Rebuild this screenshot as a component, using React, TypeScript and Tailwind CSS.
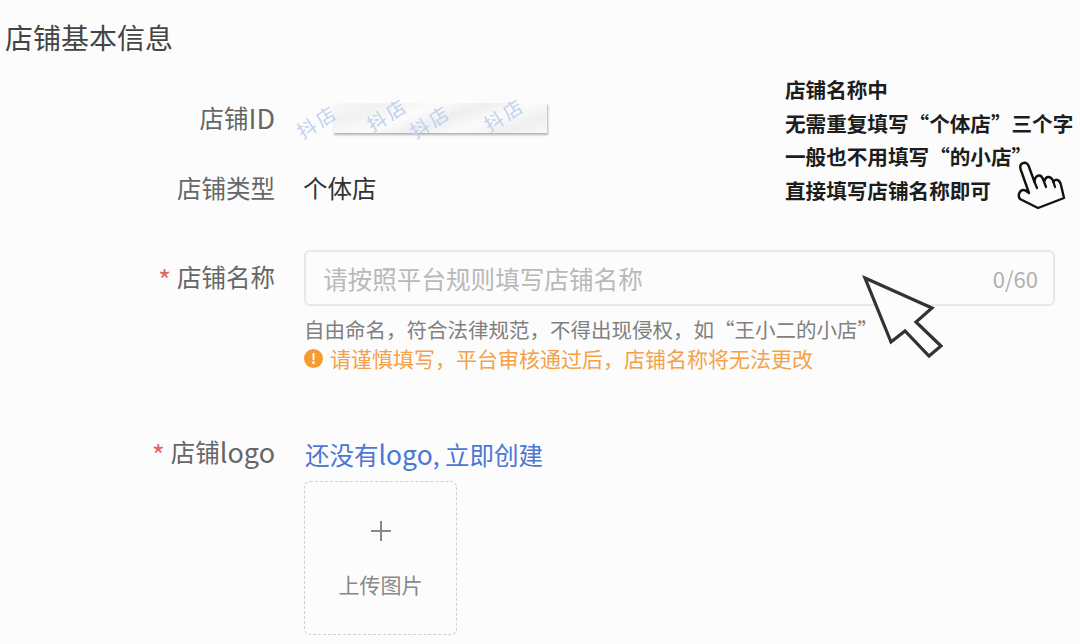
function Arrow() {
  return (
    <svg className="absolute left-[860px] top-[274px]" width="86" height="86" viewBox="0 0 86 86" fill="none">
      <path d="M5 4 L72 34 L56 48 L81 72 L69 82 L45 57 L31 68 Z" fill="#fcfcfc" stroke="#333" strokeWidth="3.2" strokeLinejoin="miter" />
    </svg>
  );
}
function Hand() {
  return (
    <svg className="absolute left-[1010px] top-[155px]" width="60" height="60" viewBox="0 0 60 60" fill="none">
      <path d="M19 38 L10.500 14 C9 8.500 15.500 5 18.500 10.500 L24.500 27 C25 20 30.500 18 33 24 L34.500 26 C36 20 41.500 21 43.500 27 C45.500 23 50 25 51 30 L54 43 L28 53 L10 44 C7 40 10 35 13.500 35 C15.500 35 17 36.500 19 38 Z" fill="#fcfcfc" stroke="#111" strokeWidth="2.4" strokeLinejoin="round" strokeLinecap="round" />
      <path d="M24.500 27 L27 33 M33 24 L36 32 M43.500 27 L45 32" stroke="#111" strokeWidth="2.2" strokeLinecap="round" />
    </svg>
  );
}
function Stamp() {
  const marks = [
    ["left-[3px] top-[5px]", "抖店"],
    ["left-[73px] top-[-2px]", "抖店"],
    ["left-[116px] top-[5px]", "抖店"],
    ["left-[190px] top-[-2px]", "抖店"],
  ];
  return (
    <div className="relative h-[36px] w-[256px]">
      <div className="absolute left-[41px] top-[2px] h-[30px] w-[214px] bg-[linear-gradient(160deg,#f8f8f8_0%,#f2f2f2_18%,#fbfbfb_38%,#eeeeee_52%,#fbfbfb_68%,#efefef_85%,#f8f8f8_100%)] shadow-[1px_2px_2px_#b5b5b5]" />
      {marks.map(([p, t], i) => (
        <span key={i} className={`absolute ${p} -rotate-[32deg] whitespace-nowrap text-[19px] leading-[30px] tracking-[3px] text-[#bfd1ee]`}>{t}</span>
      ))}
    </div>
  );
}
function Label({ star, children, cls }: { star?: boolean; children: React.ReactNode; cls?: string }) {
  return (
    <div className={`flex w-[275px] shrink-0 justify-end text-[24.500px] leading-[34px] text-[#666666] ${cls ?? ""}`}>
      {star && <span className="mr-[6px] text-[28px] leading-[38px] text-[#e5645f]">*</span>}
      {children}
    </div>
  );
}
export default function App() {
  return (
    <div lang="zh-CN" className="relative h-[644px] w-[1080px] overflow-hidden bg-[#fcfcfc] font-['Noto_Sans_CJK_SC','Noto_Sans',sans-serif]">
      <h1 className="pl-[5px] pt-[19px] text-[28px] font-normal leading-[36px] text-[#444444]">店铺基本信息</h1>
      <div className="mt-[46px] flex items-start">
        <Label>店铺<span className="text-[27px]">ID</span></Label>
        <div className="ml-[17px]"><Stamp /></div>
      </div>
      <div className="mt-[34px] flex items-start">
        <Label>店铺类型</Label>
        <div className="ml-[28px] text-[24.500px] leading-[34px] text-[#333333]">个体店</div>
      </div>
      <div className="mt-[45px] flex items-start">
        <Label star cls="pt-[10px]">店铺名称</Label>
        <div className="ml-[29px] w-[751px]">
          <div className="flex h-[56px] items-center justify-between rounded-[6px] border-2 border-[#e8e8e8] pl-[17px] pr-[15px] text-[24.600px] text-[#b9b9b9]">
            <span>请按照平台规则填写店铺名称</span>
            <span className="text-[22px] text-[#b0b0b0]">0/60</span>
          </div>
          <p className="mt-[8px] text-[20.500px] leading-[30px] text-[#808080]">自由命名，符合法律规范，不得出现侵权，如“王小二的小店”</p>
          <p className="flex items-center text-[21px] leading-[28px] text-[#f5a14a]">
            <span className="mr-[7px] flex h-[19px] w-[19px] items-center justify-center rounded-full bg-[#f59b2f] text-[14px] font-bold leading-none text-white">!</span>
            请谨慎填写，平台审核通过后，店铺名称将无法更改
          </p>
        </div>
      </div>
      <div className="mt-[64px] flex items-start">
        <Label star cls="-mt-[1px]">店铺<span className="text-[27px]">logo</span></Label>
        <div className="ml-[30px] pt-[1px]">
          <a className="block text-[24.500px] leading-[34px] text-[#4a77d4]">还没有<span className="text-[26.500px]">logo</span>, 立即创建</a>
          <div className="mt-[9px] -ml-[1px] flex h-[154px] w-[153px] flex-col items-center rounded-[6px] border border-dashed border-[#cfcfcf] text-[#888888]">
            <svg className="mt-[39px]" width="20" height="20" viewBox="0 0 20 20"><path d="M10 0V20M0 10H20" stroke="#888" strokeWidth="2" /></svg>
            <span className="mt-[28px] text-[21px] leading-[30px]">上传图片</span>
          </div>
        </div>
      </div>
      <div className="absolute left-[785px] top-[73px] text-[20.600px] font-bold leading-[33.500px] text-[#1d1d1d]">
        <p>店铺名称中</p>
        <p>无需重复填写“个体店”三个字</p>
        <p>一般也不用填写“的小店”</p>
        <p>直接填写店铺名称即可</p>
      </div>
      <Hand />
      <Arrow />
    </div>
  );
}
